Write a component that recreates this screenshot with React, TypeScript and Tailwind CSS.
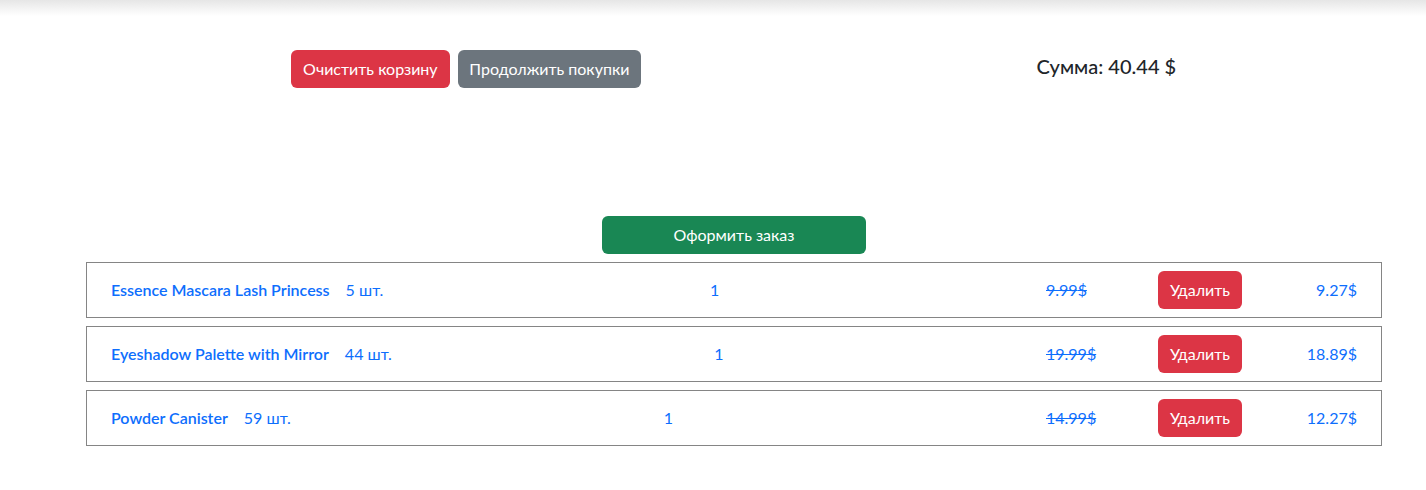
import React from "react";

type CartItem = {
  id: number;
  title: string;
  stock: number;
  count: number;
  price: number;
  final: number;
};

const items: CartItem[] = [
  { id: 1, title: "Essence Mascara Lash Princess", stock: 5, count: 1, price: 9.99, final: 9.27 },
  { id: 2, title: "Eyeshadow Palette with Mirror", stock: 44, count: 1, price: 19.99, final: 18.89 },
  { id: 3, title: "Powder Canister", stock: 59, count: 1, price: 14.99, final: 12.27 },
];

const CartRow = ({ item }: { item: CartItem }) => (
  <div className="flex items-center justify-between border border-[#858585] px-6 py-2 text-[#0d6efd]">
    <div className="flex items-center gap-4">
      <a href="#" className="font-semibold">
        {item.title}
      </a>
      <span>{item.stock} шт.</span>
    </div>
    <span>{item.count}</span>
    <div className="flex items-center">
      <span className="w-[112px] line-through">{item.price}$</span>
      <button className="h-[38px] w-[84px] rounded-md bg-[#dc3545] text-white">
        Удалить
      </button>
      <span className="w-[115px] text-right">{item.final}$</span>
    </div>
  </div>
);

export default function App() {
  return (
    <div className="min-h-[490px] bg-white font-['Lato','Noto_Sans',sans-serif] text-base leading-6 text-[#212529]">
      <div className="h-4 bg-gradient-to-b from-[#e6e6e6] to-white" />
      <div className="ml-[86px] w-[1296px]">
        <div className="mt-[34px] flex items-start justify-around pl-[7px] pr-[8px]">
          <div className="flex gap-2">
            <button className="h-[38px] w-[159px] rounded-md bg-[#dc3545] text-white">
              Очистить корзину
            </button>
            <button className="h-[38px] w-[183px] rounded-md bg-[#6c757d] text-white">
              Продолжить покупки
            </button>
          </div>
          <h5 className="mt-[2px] text-xl font-medium">Сумма: 40.44 $</h5>
        </div>
        <div className="mt-32 flex justify-center">
          <button className="h-[38px] w-[264px] rounded-md bg-[#198754] text-white">
            Оформить заказ
          </button>
        </div>
        <div className="mt-2 flex flex-col gap-2">
          {items.map((item) => (
            <CartRow key={item.id} item={item} />
          ))}
        </div>
      </div>
    </div>
  );
}
